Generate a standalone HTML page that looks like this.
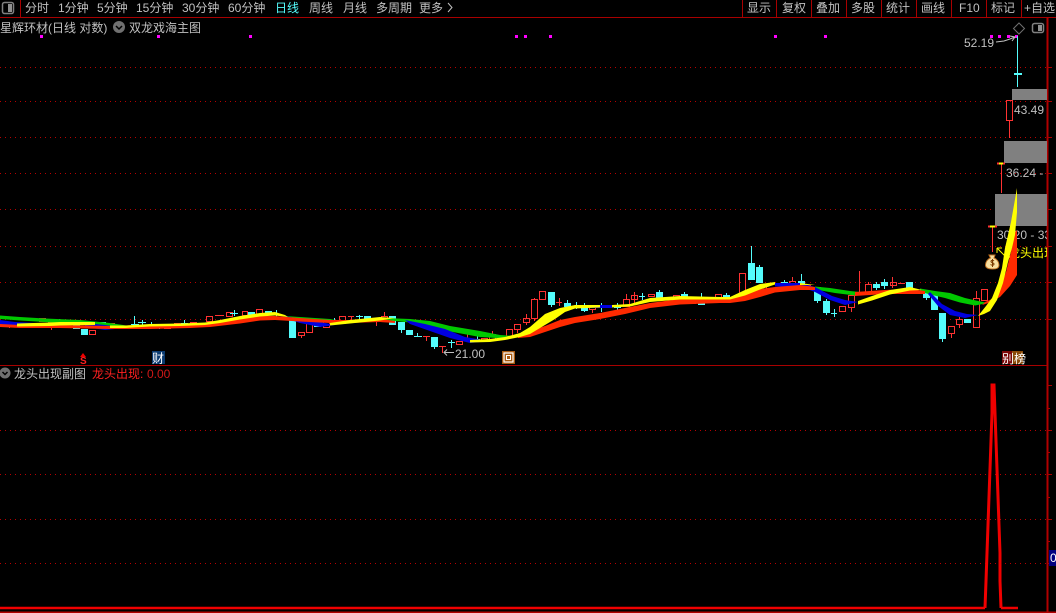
<!DOCTYPE html>
<html>
<head>
<meta charset="utf-8">
<style>
html,body{margin:0;padding:0;background:#000;width:1056px;height:613px;overflow:hidden}
svg{display:block;position:absolute;left:0;top:0}
text{font-family:"Liberation Sans","WenQuanYi Zen Hei","Noto Sans CJK SC",sans-serif;font-size:12px;fill:#c0c0c0}
.g{stroke:#b80000;stroke-width:1;stroke-dasharray:1 4;fill:none}
.a{stroke:#a80000;stroke-width:1;fill:none}
</style>
</head>
<body>
<svg width="1056" height="613" viewBox="0 0 1056 613" xmlns="http://www.w3.org/2000/svg">
<rect width="1056" height="613" fill="#000"/>

<!-- grid -->
<g shape-rendering="crispEdges">
<path class="g" d="M0 67.500H1047M0 101.500H1047M0 137.500H1047M0 173.500H1047M0 209.500H1047M0 246.500H1047M0 282.500H1047M0 319.500H1047M0 430.500H1047M0 474.500H1047M0 519.500H1047M0 563.500H1047"/>
<path class="a" d="M0 17.500H1056M0 365.500H1047M20.500 0V17M742.500 0V17M776.500 0V17M811.500 0V17M846.500 0V17M881.500 0V17M916.500 0V17M951.500 0V17M986.500 0V17M1021.500 0V17"/>
<path d="M1047.500 17V613" stroke="#b00000" stroke-width="2" fill="none"/>
<path class="a" d="M1047 67.500h5M1047 101.500h5M1047 137.500h5M1047 173.500h5M1047 209.500h5M1047 246.500h5M1047 282.500h5M1047 319.500h5M1047 385.500h5M1047 408.500h3M1047 430.500h5M1047 452.500h3M1047 474.500h5M1047 497.500h3M1047 519.500h5M1047 541.500h3M1047 563.500h5"/>
<path d="M0 612H1056" stroke="#b00000" stroke-width="1.500"/>
<rect x="1012" y="89" width="35" height="11" fill="#808080"/>
<rect x="1004" y="141" width="43" height="22" fill="#808080"/>
<rect x="995" y="194" width="52" height="32" fill="#808080"/>
</g>

<!-- toolbar -->
<rect x="2.500" y="2.500" width="11" height="11" rx="2" fill="none" stroke="#808080" stroke-width="1.500"/>
<rect x="8" y="4" width="4" height="8" fill="#909090"/>
<text x="25" y="12">分时</text>
<text x="58" y="12">1分钟</text>
<text x="97" y="12">5分钟</text>
<text x="136" y="12">15分钟</text>
<text x="182" y="12">30分钟</text>
<text x="228" y="12">60分钟</text>
<text x="275" y="12" style="fill:#54fcfc">日线</text>
<text x="309" y="12">周线</text>
<text x="343" y="12">月线</text>
<text x="376" y="12">多周期</text>
<text x="419" y="12">更多</text>
<path d="M448 3l4 4.500-4 4.500" fill="none" stroke="#c0c0c0"/>
<text x="747" y="12">显示</text>
<text x="782" y="12">复权</text>
<text x="816" y="12">叠加</text>
<text x="851" y="12">多股</text>
<text x="886" y="12">统计</text>
<text x="921" y="12">画线</text>
<text x="959" y="12">F10</text>
<text x="991" y="12">标记</text>
<text x="1024" y="12">+自选</text>

<!-- title row -->
<text x="0" y="32">星辉环材(日线 对数)</text>
<circle cx="119" cy="27" r="6" fill="#707070"/>
<path d="M116 26l3 3 3-3" fill="none" stroke="#000" stroke-width="1.500"/>
<text x="129" y="32">双龙戏海主图</text>

<path d="M1019 23l5.500 5.500-5.500 5.500-5.500-5.500z" fill="none" stroke="#707070"/>
<rect x="1032.500" y="23.500" width="11" height="9" rx="2" fill="none" stroke="#808080" stroke-width="1.500"/>
<rect x="1038" y="25" width="4" height="6" fill="#909090"/>

<!-- magenta dots -->
<g fill="#ff00ff" shape-rendering="crispEdges">
<rect x="40" y="35" width="3" height="3"/><rect x="157" y="35" width="3" height="3"/><rect x="249" y="35" width="3" height="3"/>
<rect x="515" y="35" width="3" height="3"/><rect x="524" y="35" width="3" height="3"/><rect x="549" y="35" width="3" height="3"/>
<rect x="774" y="35" width="3" height="3"/><rect x="824" y="35" width="3" height="3"/>
<rect x="990" y="35" width="3" height="3"/><rect x="998" y="35" width="3" height="3"/><rect x="1007" y="35" width="3" height="3"/><rect x="1015" y="35" width="3" height="3"/>
</g>

<!-- value labels -->
<text x="964" y="47">52.19</text>
<path d="M996 42l8-1 6-2 5-2m-5-1l5 1-3 4" fill="none" stroke="#c0c0c0"/>
<text x="1014" y="114">43.49</text>
<text x="1006" y="177">36.24 -</text>
<text x="455" y="358">21.00</text>
<path d="M454 352.500H444m3-3l-3 3 3 3" fill="none" stroke="#c0c0c0"/>
<svg x="0" y="0" width="1047" height="613" overflow="hidden">
<text x="997" y="239">30.20 - 33</text>
<text x="1008" y="257" style="fill:#ffff00">龙头出现</text>
</svg>
<path d="M997 248l8 8m-8-8v5m0-5h5" fill="none" stroke="#ffff00"/>

<!-- candles -->
<g shape-rendering="crispEdges" fill="none">
<path stroke="#ff3232" d="
M39.500 318.500h6v3h-6zM48.500 322.500h5v2h-5zM51.500 325v5M0 325.500h5M9.500 325v3M17 325.500h5M64 324.500h7M89.500 330.500h6v4h-6zM108 323.500h7
M164.500 324.500h6v4h-6zM174 323.500h7M190.500 322.500h6v3h-6zM206.500 316.500h6v5h-6zM215 315.500h9M226.500 312.500h6v4h-6zM242.500 311.500h5v4h-5zM256.500 309.500h6v5h-6z
M298.500 332.500h6v3h-6zM301.500 335v3M306.500 320.500h6v12h-6zM323.500 321.500h6v6h-6zM339.500 316.500h6v7h-6zM348 316.500h6M351.500 316v4M376.500 319v7M381.500 316.500h6v4h-6zM384.500 312v4
M423 336.500h7M426.500 337v4M439 346.500h7M442.500 347v6M456.500 341.500h6v3h-6zM467.500 333v7M481.500 338.500h6v2h-6zM489.500 334.500h6v6h-6zM492.500 331v3M506.500 329.500h6v7h-6zM514.500 324.500h6v5h-6zM517.500 330v3
M523.500 318.500h6v4h-6zM526.500 314v4M526.500 323v2M531.500 299.500h6v19h-6zM534.500 298v2M534.500 319v2M539.500 291.500h6v8h-6zM556 302.500h6M559.500 298v8M589.500 307.500h6v2h-6zM592.500 310v3M606 306.500h6M623.500 299.500h6v7h-6zM626.500 294v5M631.500 295.500h6v4h-6zM634.500 292v11M648.500 294.500h6v2h-6zM673.500 295.500h6v5h-6zM689.500 301.500h6v2h-6zM706 299.500h6M715.500 294.500h6v5h-6z
M739.500 273.500h6v20h-6zM763 290.500h7M766.500 286v6M789.500 281.500h6v6h-6zM792.500 277v4M806 285.500h5M839.500 306.500h6v5h-6zM848.500 295.500h6v12h-6zM851.500 308v4M859.500 271v24M856 293.500h7M865.500 284.500h6v8h-6zM868.500 282v2M890.500 282.500h6v3h-6zM892.500 277v11M898 283.500h7M948.500 326.500h6v7h-6zM951.500 334v4M956.500 319.500h6v5h-6zM959.500 317v2M959.500 325v3M973.500 298.500h6v29h-6zM976.500 291v7M981.500 289.500h6v11h-6z
M1006.500 100.500h6v20h-6zM1009.500 121v17M1001.500 163v30M992.500 227v25"/>
<path stroke="#ff3232" stroke-width="2" d="M997 163.500h8M988 226.500h9"/>
<path stroke="#ffff00" stroke-width="2" d="M999 163.500h4M990 226.500h5"/>
<path stroke="#54fcfc" d="
M59.500 319v7M134.500 316v8M131 324.500h8M142.500 320v5M138 322.500h8M151.500 322v6M159.500 325v4M156 327.500h7M184.500 320v6M181 323.500h7M234.500 310v6M230 313.500h8M276.500 310v8M273 314.500h7M334.500 318v5M331 321.500h7M359.500 315v5M356 316.500h7M401.500 330v3M417.500 333v4M414 336.500h8M434.500 347v2M451.500 340v8M448 342.500h7M477.500 335v6M473 339.500h7M551.500 305v2M567.500 300v3M576.500 302v7M572 306.500h8M584.500 303v9M601.500 303v9M617.500 303v8M614 307.500h7M642.500 293v7M639 296.500h6M659.500 290v2M684.500 292v2M701.500 293v9M726.500 293v2M751.500 246v17M759.500 265v2M801.500 274v7M784.500 280v2M817.500 301v2M826.500 299v2M826.500 313v2M834.500 309v8M831 313.500h6M876.500 282v8M884.500 279v10M926.500 298v2M942.500 339v3M1017.500 36v51"/>
<g fill="#54fcfc">
<rect x="1014" y="73" width="8" height="2"/>
<rect x="56" y="321" width="7" height="4"/><rect x="73" y="324" width="7" height="5"/><rect x="81" y="329" width="7" height="6"/><rect x="98" y="322" width="8" height="4"/><rect x="248" y="312" width="7" height="4"/><rect x="265" y="311" width="7" height="4"/>
<rect x="289" y="320" width="7" height="18"/><rect x="314" y="322" width="7" height="5"/><rect x="364" y="316" width="7" height="5"/><rect x="389" y="316" width="7" height="9"/><rect x="398" y="322" width="7" height="8"/><rect x="406" y="330" width="7" height="5"/><rect x="431" y="337" width="7" height="10"/>
<rect x="548" y="292" width="7" height="13"/><rect x="564" y="303" width="7" height="4"/><rect x="581" y="308" width="7" height="3"/><rect x="656" y="292" width="7" height="6"/><rect x="681" y="294" width="7" height="5"/><rect x="698" y="302" width="7" height="3"/><rect x="723" y="295" width="7" height="5"/>
<rect x="748" y="263" width="7" height="17"/><rect x="756" y="267" width="7" height="16"/><rect x="781" y="282" width="7" height="7"/><rect x="798" y="281" width="7" height="4"/><rect x="814" y="287" width="7" height="14"/><rect x="823" y="301" width="7" height="12"/><rect x="873" y="284" width="7" height="4"/><rect x="881" y="282" width="7" height="4"/><rect x="906" y="282" width="7" height="11"/><rect x="923" y="292" width="7" height="6"/><rect x="931" y="295" width="7" height="15"/><rect x="939" y="313" width="7" height="26"/><rect x="964" y="319" width="7" height="4"/>
</g>
</g>

<!-- ribbons -->
<g fill="none">
<path fill="#00c800" d="M0 315.500L20 317L45 318.500L80 320L110 323L130 326L110 327L80 324L45 322L20 320.500L0 319Z"/>
<path fill="#00c800" d="M285 316L300 317L330 319L340 321L330 322.500L300 320.500L285 318Z"/>
<path fill="#00c800" d="M385 318L410 319L430 321L450 326L480 331L500 335L515 336L505 338.500L480 337L450 331.500L430 326L410 322.500L385 320Z"/>
<path fill="#00c800" d="M815 286.500L830 288L850 291L870 293L855 295.500L835 293L815 289.500Z"/>
<path fill="#00c800" d="M920 288.500L935 291L950 293L965 298L978 301L988 303L975 305.500L960 302.500L945 298L930 294.500L920 291.500Z"/>
<path fill="#0000e0" d="M0 320L15 322L35 323L15 327L0 325Z"/>
<path fill="#0000e0" d="M85 323L105 325L125 328L105 330L85 327Z"/>
<path fill="#0000e0" d="M285 316L300 319L325 323L335 325L320 327L300 323L285 318Z"/>
<path fill="#0000e0" d="M405 320L425 324L445 329L465 337L490 341L470 343L450 338L430 331L410 324Z"/>
<path fill="#0000e0" d="M590 305L612 305L612 308L590 308Z"/>
<path fill="#0000e0" d="M692 298L712 298L712 300L692 300Z"/>
<path fill="#0000e0" d="M775 283L800 283L815 287L832 296L845 300L858 302L845 305L830 300L815 292L800 286.500L775 286.500Z"/>
<path fill="#0000e0" d="M930 292L942 304L955 311L967 314L978 315L965 318L950 315L938 306L928 294Z"/>
<path fill="#ff2a00" d="M0 324L20 325L60 325L110 326L150 326L190 325L210 324L240 319L260 316L275 316L300 318L330 320L350 320L380 319L395 321L395 323L380 322L350 323L330 323L300 321.500L275 320L260 320.500L240 323.500L210 327L190 328L150 329L110 329L60 328L20 328L0 327Z"/>
<path fill="#ff2a00" d="M518 334.500L530 331L545 326L560 320L575 317L600 313L625 308L650 303L680 299L720 298L730 298L745 293L760 289L775 287L800 285L815 287L815 290L800 290L775 292.500L760 297L745 301L730 303L720 303L680 304.500L650 308L625 314L600 319L575 323L560 327L545 332L530 337L518 338Z"/>
<path fill="#ff2a00" d="M855 292L885 290L910 289L925 291L925 294L910 294L885 294L855 296Z"/>
<path fill="#ff2a00" d="M985 302L992 299L1001 285L1006 272L1011 252L1015 232L1017 230L1017 275L1010 286L1000 297L990 302.500L982 305Z"/>
<path fill="#ffff00" d="M17 323.500L50 322.500L60 322L95 322L95 325L60 325.500L50 326L17 326.500Z"/>
<path fill="#ffff00" d="M110 325.500L125 325.500L150 324L180 323.500L205 322.500L220 320L240 316L260 313L275 312L285 315L288 317L275 315.500L260 316.500L240 319.500L220 323L205 325L180 326L150 326.500L125 328L110 328Z"/>
<path fill="#ffff00" d="M330 323L350 320L380 317L395 318L380 320.500L350 323.500L330 325.500Z"/>
<path fill="#ffff00" d="M470 340L490 339L505 337L520 333L530 327L545 314L560 308L575 305L600 305L600 307.500L575 308.500L565 312L555 319L540 328L530 334L520 337L505 340L490 342L470 342.500Z"/>
<path fill="#ffff00" d="M612 305L630 304L650 298L680 296L720 297L730 297L745 290L760 284L775 282L775 284.500L760 289.500L745 295.500L730 299.500L720 299.500L680 299.500L650 302L630 306.500L612 307.500Z"/>
<path fill="#ffff00" d="M800 283L815 285L800 285Z"/>
<path fill="#ffff00" d="M858 301L872 296L890 290L910 287L922 290L910 290.500L890 294.500L872 300.500L858 304.500Z"/>
<path fill="#ffff00" d="M978 316L986 306L992 298L998 283L1002 268L1005 248L1011 222L1017 188L1017 212L1015 235L1012 248L1008 262L1003 283L997 300L990 311L984 314Z"/>
</g>

<!-- money bag -->
<path d="M989 255h6l-1 3c3 1 5 4 5 7 0 3-2 4-6.500 4s-7-1-7-4c0-3 2-6 5-7z" fill="#f8dfa0" stroke="#c07020"/>
<path d="M994 261c-1-1-3-1-3 .5s3 1 3 2.500-2 1.500-3.500 .5M992.500 259v8" fill="none" stroke="#7a3a00"/>

<!-- markers -->
<path d="M83 353l3 4h-6z" fill="#f00000"/>
<text x="80" y="364" style="fill:#ff2020;font-size:10px;font-weight:bold">S</text>
<rect x="152" y="351" width="13" height="13" fill="#0a3a70"/>
<text x="152" y="362.500" style="fill:#fff">财</text>
<rect x="502" y="351" width="13" height="13" fill="#a85a10"/>
<rect x="504" y="353" width="9" height="9" fill="none" stroke="#fff" stroke-width="1.200"/>
<rect x="506.500" y="355.500" width="4" height="4" fill="none" stroke="#fff"/>
<rect x="1002" y="351" width="10" height="13" fill="#7a0808"/>
<rect x="1012" y="351" width="11" height="13" fill="#8a4a08"/>
<text x="1002" y="363" style="fill:#fff">别榜</text>

<!-- sub panel title -->
<circle cx="5" cy="373" r="5.500" fill="#707070"/>
<path d="M2.500 372l2.500 2.500 2.500-2.500" fill="none" stroke="#000" stroke-width="1.500"/>
<text x="14" y="378">龙头出现副图</text>
<text x="92" y="378" style="fill:#ff2020">龙头出现:</text>
<text x="147" y="378" style="fill:#d01818">0.00</text>

<!-- bottom line -->
<path d="M0 608H985" fill="none" stroke="#f00000" stroke-width="2.400"/>
<path d="M985 608L986 581L987 553L988 525L989 497L990 469L991 441L992 413L992 385H994L995 413L996 441L997 469L998 497L999 525L1000 553L1000 581L1001 608" fill="none" stroke="#f00000" stroke-width="3"/>
<path d="M1001 608H1018" fill="none" stroke="#f00000" stroke-width="2.400"/>

<!-- axis box -->
<rect x="1049" y="550" width="7" height="16" fill="#000080"/>
<text x="1050" y="562" style="fill:#fff">0</text>
</svg>
</body>
</html>
